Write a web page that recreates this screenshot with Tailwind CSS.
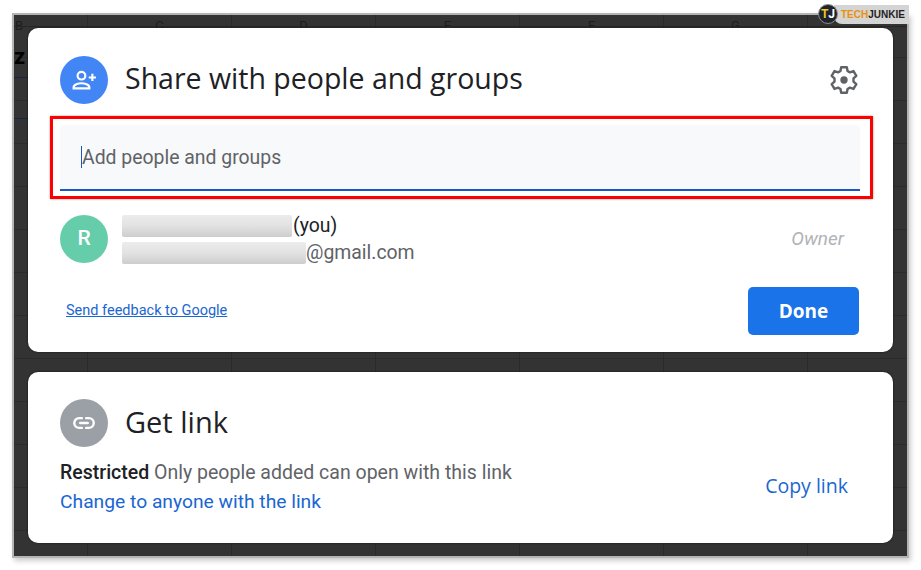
<!DOCTYPE html>
<html lang="en">
<head>
  <meta charset="UTF-8">
  <title>Share with people and groups</title>
  <script src="https://cdn.jsdelivr.net/npm/@tailwindcss/browser@4"></script>
</head>
<body class="bg-white w-[921px] h-[570px] overflow-hidden font-['Roboto',sans-serif]">
  <div class="pl-[12px] pt-[13px]">
    <!-- Dimmed spreadsheet frame -->
    <div class="relative w-[897px] h-[545px] border-2 border-[#b4b4b4] bg-[#333333] shadow-[2px_3px_5px_rgba(0,0,0,0.2)] px-[14px] pt-[13px]">
      <!-- Spreadsheet behind the dialog -->
      <div class="absolute inset-0 bg-[repeating-linear-gradient(180deg,transparent_0,transparent_42px,#2b2b2b_42px,#2b2b2b_43px)]"></div>
      <div class="absolute inset-0 flex pl-[73px] text-[#1d1d1d] text-[13px] leading-[22px]">
        <div class="w-[144px] border-l border-[#2a2a2a] text-center">C</div>
        <div class="w-[144px] border-l border-[#2a2a2a] text-center">D</div>
        <div class="w-[144px] border-l border-[#2a2a2a] text-center">E</div>
        <div class="w-[144px] border-l border-[#2a2a2a] text-center">F</div>
        <div class="w-[144px] border-l border-[#2a2a2a] text-center">G</div>
        <div class="w-[100px] border-l border-[#2a2a2a]"></div>
      </div>
      <div class="absolute left-[1px] top-0 text-[#1d1d1d] text-[13px] leading-[22px]">B</div>
      <div class="absolute left-0 top-[27px] text-black font-bold text-[22px] leading-[30px]">z</div>
      <div class="absolute left-0 w-[14px] top-[62px] h-px bg-[#16264a]"></div>
      <div class="absolute left-0 w-[14px] top-[103px] h-px bg-[#16264a]"></div>
      <div class="absolute left-0 right-0 top-[11px] h-px bg-[#262626]"></div>

      <!-- Share card -->
      <section class="relative bg-white rounded-[10px] w-[865px] h-[324px] px-[32px] pt-[28px] flex flex-col shadow-[0_0_2px_#111111]">
        <div class="flex items-center h-[48px]">
          <div class="w-[48px] h-[48px] rounded-full bg-[#4285f4] flex items-center justify-center">
            <svg class="w-[29px] h-[29px]" viewBox="0 0 24 24" fill="none" stroke="white" stroke-width="1.800">
              <circle cx="9.500" cy="8" r="3.200"/>
              <path d="M3 18.500v-1c0-2 4-3.200 6.500-3.200s6.500 1.200 6.500 3.200v1z"/>
              <path d="M18.500 6.500v6M15.500 9.500h6"/>
            </svg>
          </div>
          <h1 class="ml-[17px] -mt-[3px] text-[28.500px] text-[#202124] font-['Open_Sans',sans-serif]">Share with people and groups</h1>
          <svg class="ml-auto mr-0 w-[34px] h-[34px]" viewBox="0 0 24 24" fill="none" stroke="#5f6368" stroke-width="1.700" stroke-linejoin="round">
            <path d="M10 3h4l.5 2.600 1.700 1 2.500-.9 2 3.400-2 1.700v2.400l2 1.700-2 3.400-2.500-.9-1.700 1L14 21h-4l-.5-2.600-1.700-1-2.500.9-2-3.400 2-1.700v-2.400l-2-1.700 2-3.400 2.500.9 1.700-1z"/>
            <circle cx="12" cy="12" r="2.600" fill="#5f6368" stroke="none"/>
          </svg>
        </div>

        <!-- Highlighted input -->
        <div class="mt-[12px] -ml-[10px] w-[823px] h-[83px] border-[3px] border-[#ff0000] pl-[7px] pr-[10px] pt-[6px] shadow-[0_0_2px_rgba(0,0,0,0.4)]">
          <div class="h-[66px] bg-[#f8f9fa] rounded-t-[4px] border-b-2 border-[#1a56c4] pl-[21px] flex items-center">
            <span class="w-px h-[22px] bg-[#1a56c4]"></span>
            <span class="mt-[2px] text-[19.400px] text-[#5f6368]">Add people and groups</span>
          </div>
        </div>

        <!-- Owner row -->
        <div class="flex items-center mt-[14px] h-[52px]">
          <div class="w-[48px] h-[48px] rounded-full bg-[#66cdaa] text-white text-[21px] font-medium flex items-center justify-center">R</div>
          <div class="ml-[14px] text-[19.400px] leading-[27px]">
            <div class="flex items-center text-[#202124]">
              <span class="w-[170px] h-[22px] rounded-[2px] bg-gradient-to-b from-[#ececec] via-[#e2e2e2] to-[#cdcdcd]"></span>
              <span class="ml-px">(you)</span>
            </div>
            <div class="flex items-center text-[#5f6368]">
              <span class="w-[184px] h-[22px] rounded-[2px] bg-gradient-to-b from-[#ececec] via-[#e2e2e2] to-[#cdcdcd]"></span>
              <span>@gmail.com</span>
            </div>
          </div>
          <span class="ml-auto mr-[17px] text-[19px] italic text-[#b0b3b6]">Owner</span>
        </div>

        <!-- Footer -->
        <div class="flex items-center justify-between mt-[22px]">
          <a href="#" class="ml-[6px] text-[14.500px] text-[#1a66d2] underline">Send feedback to Google</a>
          <button class="w-[111px] h-[48px] mr-[2px] rounded-[5px] bg-[#1a73e8] text-white text-[19px] font-bold font-['Open_Sans',sans-serif]">Done</button>
        </div>
      </section>

      <!-- Get link card -->
      <section class="relative bg-white rounded-[10px] w-[865px] h-[171px] mt-[20px] px-[32px] pt-[27px] shadow-[0_0_2px_#111111]">
        <div class="flex items-center h-[48px]">
          <div class="w-[48px] h-[48px] rounded-full bg-[#9aa0a6] flex items-center justify-center">
            <svg class="w-[26px] h-[26px]" viewBox="0 0 24 24" fill="none" stroke="white" stroke-width="2.200" stroke-linecap="round">
              <path d="M10 7.500H7.500a4.500 4.500 0 0 0 0 9H10M14 7.500h2.500a4.500 4.500 0 0 1 0 9H14M8.500 12h7"/>
            </svg>
          </div>
          <h2 class="ml-[17px] text-[29px] text-[#202124] font-['Open_Sans',sans-serif] -mt-[2px]">Get link</h2>
        </div>
        <div class="flex items-center justify-between mt-[11px]">
          <div class="leading-[29px]">
            <p class="text-[19.500px] text-[#5f6368]"><span class="font-medium text-[#202124]">Restricted</span> Only people added can open with this link</p>
            <a href="#" class="text-[19.250px] text-[#1a66d2]">Change to anyone with the link</a>
          </div>
          <a href="#" class="mr-[13px] mb-[4px] text-[19.500px] text-[#1a66d2] font-['Open_Sans',sans-serif]">Copy link</a>
        </div>
      </section>
    </div>

    <!-- Watermark -->
    <div class="absolute left-[818px] top-[4px] flex items-center">
      <div class="relative z-10 w-[20px] h-[20px] rounded-full bg-[#1c2430] border border-[#8a8a8a] flex items-center justify-center text-[12px] font-bold text-[#f5c518] leading-none">T<span class="text-white">J</span></div>
      <div class="-ml-[4px] w-[75px] h-[19px] bg-[#d4d4d4] rounded-bl-[8px] pl-[7px] text-[10px] leading-[19px] font-bold font-['Liberation_Sans',sans-serif]"><span class="text-[#e8920c]">TECH</span><span class="text-[#222222]">JUNKIE</span></div>
    </div>
  </div>
</body>
</html>
